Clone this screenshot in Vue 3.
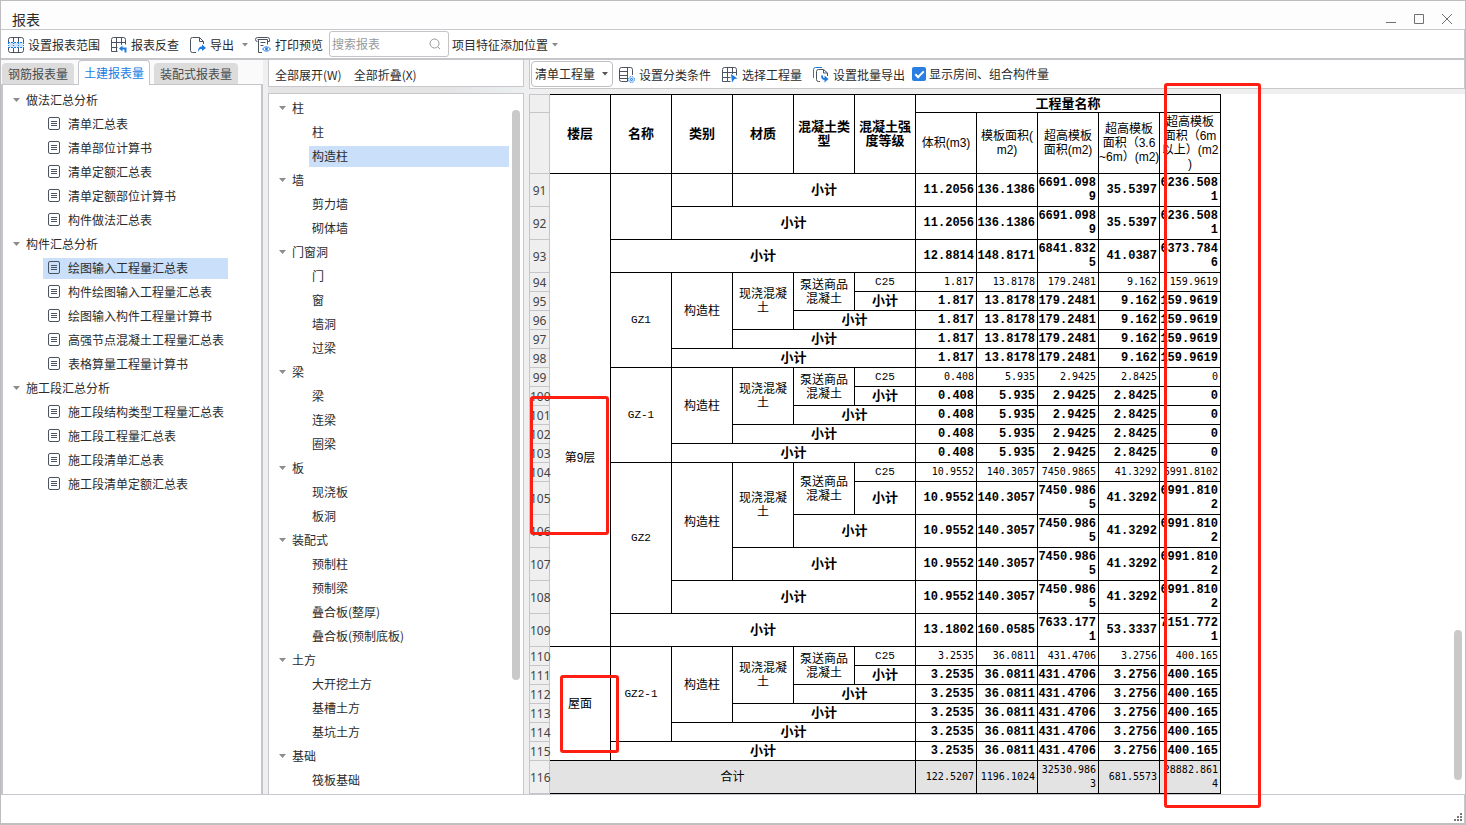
<script setup>
import { ref } from 'vue'

const keyword = ref('')
const quantityType = ref('清单工程量')
const showRooms = ref(true)

const tabs = ['钢筋报表量', '土建报表量', '装配式报表量']
const activeTab = ref('土建报表量')
const activeReport = ref('绘图输入工程量汇总表')
const activeMember = ref('构造柱')

const reports = [
  { name: '做法汇总分析', items: ['清单汇总表', '清单部位计算书', '清单定额汇总表', '清单定额部位计算书', '构件做法汇总表'] },
  { name: '构件汇总分析', items: ['绘图输入工程量汇总表', '构件绘图输入工程量汇总表', '绘图输入构件工程量计算书', '高强节点混凝土工程量汇总表', '表格算量工程量计算书'] },
  { name: '施工段汇总分析', items: ['施工段结构类型工程量汇总表', '施工段工程量汇总表', '施工段清单汇总表', '施工段清单定额汇总表'] },
]

const members = [
  { name: '柱', items: ['柱', '构造柱'] },
  { name: '墙', items: ['剪力墙', '砌体墙'] },
  { name: '门窗洞', items: ['门', '窗', '墙洞', '过梁'] },
  { name: '梁', items: ['梁', '连梁', '圈梁'] },
  { name: '板', items: ['现浇板', '板洞'] },
  { name: '装配式', items: ['预制柱', '预制梁', '叠合板(整厚)', '叠合板(预制底板)'] },
  { name: '土方', items: ['大开挖土方', '基槽土方', '基坑土方'] },
  { name: '基础', items: ['筏板基础'] },
]

const dimensions = [['楼层'], ['名称'], ['类别'], ['材质'], ['混凝土类', '型'], ['混凝土强', '度等级']]
const measures = [
  ['体积(m3)'],
  ['模板面积(', 'm2)'],
  ['超高模板', '面积(m2)'],
  ['超高模板', '面积（3.6', '~6m）(m2)'],
  ['超高模板', '面积（6m', '以上）(m2', ')'],
]

const sub = (cols) => ({ text: '小计', cols, kind: 'sum' })

// One component type: a C25 line followed by four nested subtotals.
function block(first, name, values, tall, floor) {
  const heads = [
    [
      ...(floor ? [floor] : []),
      { text: name, rows: 5, kind: 'code' },
      { text: '构造柱', rows: 4 },
      { text: '现浇混凝土', rows: 3, kind: 'wrap' },
      { text: '泵送商品混凝土', rows: 2, kind: 'wrap' },
      { text: 'C25', kind: 'code' },
    ],
    [sub(1)],
    [sub(2)],
    [sub(3)],
    [sub(4)],
  ]
  return heads.map((cells, i) => ({ no: first + i, cells, values, bold: i > 0, tall: tall && i > 0 }))
}

const rows = [
  {
    no: 91,
    cells: [{ text: '第9层', rows: 19, kind: 'floor' }, { text: '', rows: 2 }, { text: '' }, sub(3)],
    values: ['11.2056', '136.1386', '6691.0989', '35.5397', '6236.5081'], bold: true, tall: true,
  },
  { no: 92, cells: [sub(4)], values: ['11.2056', '136.1386', '6691.0989', '35.5397', '6236.5081'], bold: true, tall: true },
  { no: 93, cells: [sub(5)], values: ['12.8814', '148.8171', '6841.8325', '41.0387', '6373.7846'], bold: true, tall: true },
  ...block(94, 'GZ1', ['1.817', '13.8178', '179.2481', '9.162', '159.9619'], false),
  ...block(99, 'GZ-1', ['0.408', '5.935', '2.9425', '2.8425', '0'], false),
  ...block(104, 'GZ2', ['10.9552', '140.3057', '7450.9865', '41.3292', '6991.8102'], true),
  { no: 109, cells: [sub(5)], values: ['13.1802', '160.0585', '7633.1771', '53.3337', '7151.7721'], bold: true, tall: true },
  ...block(110, 'GZ2-1', ['3.2535', '36.0811', '431.4706', '3.2756', '400.165'], false, { text: '屋面', rows: 6 }),
  { no: 115, cells: [sub(5)], values: ['3.2535', '36.0811', '431.4706', '3.2756', '400.165'], bold: true },
  { no: 116, cells: [{ text: '合计', cols: 6 }], values: ['122.5207', '1196.1024', '32530.9863', '681.5573', '28882.8614'], tall: true, total: true },
]
</script>

<template>
  <div class="window">
    <header class="titlebar">
      <h1>报表</h1>
      <div class="controls">
        <button type="button" aria-label="最小化"><svg width="12" height="12" viewBox="0 0 12 12"><path d="M1 9.5h10" /></svg></button>
        <button type="button" aria-label="最大化"><svg width="12" height="12" viewBox="0 0 12 12"><path d="M1.500 1.500h9v9h-9z" /></svg></button>
        <button type="button" aria-label="关闭"><svg width="12" height="12" viewBox="0 0 12 12"><path d="M1 1l10 10M11 1L1 11" /></svg></button>
      </div>
    </header>

    <div class="toolbar">
      <button type="button" class="tool">
        <svg class="ico" width="16" height="16" viewBox="0 0 16 16">
          <rect x="1" y="5.500" width="14" height="5" class="pale" />
          <path d="M.5 5V2.500a2 2 0 0 1 2-2h11a2 2 0 0 1 2 2V5M.5 11v2.500a2 2 0 0 0 2 2h11a2 2 0 0 0 2-2V11M5.500.5V5M10.500.5V5M5.500 11v4.500M10.500 11v4.500" />
          <path class="blue" d="M0 5.500h16M0 10.500h16" stroke-dasharray="2 1" />
          <path class="blue" d="M.5 6v4M5.500 6v4M10.500 6v4M15.500 6v4" stroke-dasharray="1 1" />
        </svg>
        设置报表范围
      </button>
      <button type="button" class="tool">
        <svg class="ico" width="16" height="16" viewBox="0 0 16 16">
          <path d="M.5 10.500h6M.5 5.500h14M.5 10.500V2.500a2 2 0 0 1 2-2h10a2 2 0 0 1 2 2v5M5.500.5v14M10.500.5V8M.5 10.500v4h6" />
          <path class="blue thick" d="M9.500 11.500h5V15.500" />
          <path class="bluefill" d="M8 11.500L11.500 8.500v6z" />
        </svg>
        报表反查
      </button>
      <button type="button" class="tool export">
        <svg class="ico" width="16" height="16" viewBox="0 0 16 16">
          <path d="M6 15.500H2.500a2 2 0 0 1-2-2v-11a2 2 0 0 1 2-2h7l4 4V7M9.500.5v4h4" />
          <path class="bluefill" d="M8 15c0-4 1.500-5.500 4-5.500V7.500l4 3.500-4 3v-2c-2 0-3 .5-4 3z" />
        </svg>
        导出
        <svg class="caret" width="6" height="4" viewBox="0 0 6 4"><path d="M0 0h6L3 3.500z" /></svg>
      </button>
      <button type="button" class="tool">
        <svg class="ico" width="16" height="16" viewBox="0 0 16 16">
          <path d="M2.500 4.500a2 2 0 0 1-2-2 2 2 0 0 1 2-2h10a2 2 0 0 1 2 2v2h-2M2.500 2.500h10M3.500 3v12.500H7M12.500 2.500v5M5.500 5.500h5M5.500 8.500h3" />
          <path class="blue" d="M7.500 12q4-4.500 8 0-4 4.500-8 0z" />
          <circle class="bluefill" cx="11.500" cy="12" r="1.400" />
        </svg>
        打印预览
      </button>
      <label class="search">
        <input v-model="keyword" type="text" placeholder="搜索报表" aria-label="搜索报表" />
        <svg width="12" height="12" viewBox="0 0 12 12"><circle cx="5.500" cy="5.500" r="4.500" /><path d="M8.800 8.800L11 11" /></svg>
      </label>
      <button type="button" class="tool place">
        项目特征添加位置
        <svg class="caret" width="6" height="4" viewBox="0 0 6 4"><path d="M0 0h6L3 3.500z" /></svg>
      </button>
    </div>

    <main>
      <section class="left">
        <div class="tabs" role="tablist">
          <button
            v-for="tab in tabs" :key="tab" type="button" role="tab"
            :aria-selected="tab === activeTab" :class="{ on: tab === activeTab }" @click="activeTab = tab"
          >{{ tab }}</button>
        </div>
        <nav class="tree reports">
          <template v-for="group in reports" :key="group.name">
            <div class="group"><svg width="7" height="4" viewBox="0 0 7 4"><path d="M0 0h7L3.500 4z" /></svg>{{ group.name }}</div>
            <div v-for="item in group.items" :key="item" class="line">
              <button type="button" :class="{ on: item === activeReport }" @click="activeReport = item">
                <svg class="doc" width="12" height="13" viewBox="0 0 12 13"><rect x=".5" y=".5" width="11" height="12" rx="1.500" /><path d="M3 4.500h6M3 6.500h6M3 8.500h6" /></svg>
                {{ item }}
              </button>
            </div>
          </template>
        </nav>
      </section>

      <section class="middle">
        <div class="bar fold">
          <button type="button" class="tool">全部展开(W)</button>
          <button type="button" class="tool">全部折叠(X)</button>
        </div>
        <nav class="tree members">
          <template v-for="group in members" :key="group.name">
            <div class="group"><svg width="7" height="4" viewBox="0 0 7 4"><path d="M0 0h7L3.500 4z" /></svg>{{ group.name }}</div>
            <div v-for="item in group.items" :key="item" class="line">
              <button type="button" :class="{ on: item === activeMember }" @click="activeMember = item">{{ item }}</button>
            </div>
          </template>
          <span class="thumb"></span>
        </nav>
      </section>

      <section class="right">
        <div class="bar options">
          <div class="select">
            <select v-model="quantityType" aria-label="工程量类型">
              <option>清单工程量</option>
              <option>定额工程量</option>
            </select>
            <svg class="caret dark" width="6" height="4" viewBox="0 0 6 4"><path d="M0 0h6L3 3.500z" /></svg>
          </div>
          <button type="button" class="tool">
            <svg class="ico" width="16" height="16" viewBox="0 0 16 16">
              <path d="M8.500 14.500h-6a2 2 0 0 1-2-2v-10a2 2 0 0 1 2-2h9a2 2 0 0 1 2 2V8M8.500.5v14M.5 4.500h8M.5 8.500h8M.5 11.500h8" />
              <circle class="gear" cx="12.500" cy="12.500" r="2.500" />
              <circle class="blue" cx="12.500" cy="12.500" r="3" stroke-dasharray="1.400 .95" />
              <circle class="blue" cx="12.500" cy="12.500" r="1" />
            </svg>
            设置分类条件
          </button>
          <button type="button" class="tool">
            <svg class="ico" width="16" height="16" viewBox="0 0 16 16">
              <path d="M8.500 14.500h-3M.5 10.500h8M.5 5.500h14M.5 10.500v-8a2 2 0 0 1 2-2h10a2 2 0 0 1 2 2v6M5.500.5v14M10.500.5V7M.5 10.500v4h5" />
              <path class="bluefill" d="M9 7l6.500 4.500-3 .5-2.500 3.500z" />
            </svg>
            选择工程量
          </button>
          <button type="button" class="tool">
            <svg class="ico" width="16" height="16" viewBox="0 0 16 16">
              <path class="blue" d="M.5 11V2.500a2 2 0 0 1 2-2H9" />
              <path d="M7 14.500H5.500a2 2 0 0 1-2-2v-8a2 2 0 0 1 2-2h5l4 3.500v3M10.500 3v3h4" />
              <path class="blue thick" d="M9 8.500c0 3 1 3.500 3 3.500" />
              <path class="bluefill" d="M11.500 8.500L15.500 12l-4 3.500z" />
            </svg>
            设置批量导出
          </button>
          <label class="check"><input v-model="showRooms" type="checkbox" />显示房间、组合构件量</label>
        </div>

        <div class="sheet">
          <table>
            <colgroup>
              <col class="num" />
              <col v-for="n in 11" :key="n" class="data" />
            </colgroup>
            <thead>
              <tr class="h1">
                <th class="no"></th>
                <th v-for="head in dimensions" :key="head[0]" rowspan="2" class="dim">
                  <template v-for="(part, i) in head" :key="part"><br v-if="i" />{{ part }}</template>
                </th>
                <th colspan="5" class="dim">工程量名称</th>
              </tr>
              <tr class="h2">
                <th class="no"></th>
                <th v-for="(head, m) in measures" :key="m" class="measure">
                  <template v-for="(part, i) in head" :key="part"><br v-if="i" />{{ part }}</template>
                </th>
              </tr>
            </thead>
            <tbody>
              <tr v-for="row in rows" :key="row.no" :class="{ tall: row.tall, bold: row.bold, total: row.total }">
                <th class="no" scope="row">{{ row.no }}</th>
                <td v-for="(cell, i) in row.cells" :key="i" :rowspan="cell.rows || 1" :colspan="cell.cols || 1" :class="cell.kind">{{ cell.text }}</td>
                <td v-for="(value, i) in row.values" :key="'v' + i" class="value">{{ value }}</td>
              </tr>
            </tbody>
          </table>
          <span class="thumb"></span>
          <span class="mark floors"></span>
          <span class="mark roof"></span>
          <span class="mark column"></span>
        </div>
      </section>
    </main>

    <footer>
      <svg width="9" height="9" viewBox="0 0 9 9"><path d="M6 0h2v2H6zM3 3h2v2H3zM6 3h2v2H6zM0 6h2v2H0zM3 6h2v2H3zM6 6h2v2H6z" /></svg>
    </footer>
  </div>
</template>

<style>
body {
  margin: 0;
  background: #fff;
}
</style>

<style scoped>
.window {
  box-sizing: border-box;
  min-height: 100vh;
  display: flex;
  flex-direction: column;
  border: 1px solid #bdbdbf;
  border-bottom: 2px solid #c0c0c2;
  background: #fff;
  color: #2b2b2b;
  font: 12px/18px "Noto Sans CJK SC", "Noto Sans", sans-serif;
  overflow: hidden;
}

button,
input,
select {
  font: inherit;
  color: inherit;
  margin: 0;
}

button {
  border: 0;
  padding: 0;
  background: none;
  white-space: nowrap;
}

.titlebar {
  display: flex;
  align-items: center;
  justify-content: space-between;
  height: 28px;
  padding: 0 12px 0 11px;
  background: #fdfdfd;
}

h1 {
  margin: 0;
  padding-top: 8px;
  font-size: 14px;
  font-weight: 400;
  line-height: 20px;
}

.controls {
  display: flex;
  gap: 16px;
  padding-top: 8px;
}

.controls button {
  display: flex;
}

svg {
  flex: none;
  fill: none;
}

.controls svg {
  stroke: #707070;
}

.toolbar {
  display: flex;
  align-items: center;
  height: 28px;
  padding-left: 7px;
  border-top: 1px solid #c8c8cc;
  border-right: 1px solid #c8c8cc;
  border-bottom: 2px solid #c4c6ca;
}

.tool {
  display: flex;
  align-items: center;
  gap: 4px;
}

.toolbar .tool {
  margin-right: 11px;
  padding-top: 2px;
}

.toolbar .export {
  margin-right: 7px;
}

.toolbar .place {
  margin: 0 0 0 3px;
}

.export .caret {
  margin-left: 4px;
}

.ico {
  stroke: #4b5260;
}

.ico .blue {
  stroke: #1f7ae0;
}

.ico .thick {
  stroke-width: 2;
}

.ico .bluefill {
  fill: #1f7ae0;
  stroke: none;
}

.ico .pale,
.ico .gear {
  fill: #cfe4fb;
  stroke: none;
}

.caret {
  fill: #8a8a8a;
}

.dark {
  fill: #555;
}

.search {
  display: flex;
  align-items: center;
  box-sizing: border-box;
  width: 120px;
  height: 26px;
  padding: 0 7px 0 2px;
  margin-left: -5px;
  border: 1px solid #c4c4c6;
  border-radius: 3px;
}

.search input {
  flex: 1;
  min-width: 0;
  border: 0;
  padding: 0;
  outline: 0;
  background: none;
}

.search input::placeholder {
  color: #9a9a9a;
}

.search svg {
  stroke: #999;
}

main {
  flex: 1;
  display: flex;
  gap: 5px;
  background: #efeff0;
}

.left {
  flex: 0 0 262px;
  display: flex;
  flex-direction: column;
}

.tabs {
  display: flex;
  align-items: flex-end;
  gap: 4px;
  height: 24px;
  padding-left: 1px;
  background: #fafafa;
}

.tabs button {
  box-sizing: border-box;
  height: 21px;
  padding: 0 6px;
  border-radius: 4px 4px 0 0;
  background: #dcdcdd;
  color: #4a4a4a;
}

.tabs .on {
  height: 25px;
  margin-bottom: -1px;
  padding: 0 5px;
  border: 1px solid #c4c4cc;
  border-bottom: 0;
  background: #fff;
  color: #1b7ce4;
  position: relative;
}

.tree {
  flex: 1;
  background: #fff;
}

.reports {
  border: 1px solid #c4c6ca;
  border-width: 1px 2px 0;
  padding-top: 3px;
}

.group {
  display: flex;
  align-items: center;
  gap: 6px;
  height: 24px;
  padding-left: 10px;
}

.group svg {
  fill: #8c8c8c;
}

.line {
  display: flex;
  align-items: center;
  height: 24px;
}

.line button {
  display: flex;
  align-items: center;
  height: 21px;
  text-align: left;
}

.reports .line {
  padding-left: 40px;
}

.reports button {
  width: 185px;
  gap: 8px;
  padding-left: 5px;
}

.doc {
  margin-bottom: 2px;
  stroke: #4b5260;
}

.line .on {
  background: #c9dffa;
}

.middle {
  flex: 0 0 256px;
  display: flex;
  flex-direction: column;
  gap: 6px;
  background: linear-gradient(to right, #e4e4e5, #e4e4e5 70%, #ecf0f1);
}

.bar {
  display: flex;
  align-items: center;
  box-sizing: border-box;
  border: 1px solid #c8c8cc;
  border-top: 0;
  background: #fff;
}

.fold {
  height: 27px;
  gap: 12px;
  padding: 3px 6px 0;
}

.members {
  position: relative;
  border: 1px solid #c8c8cc;
  border-bottom: 0;
  padding-top: 2px;
}

.members .line {
  padding-left: 40px;
}

.members .line button {
  width: 200px;
  padding-left: 3px;
}

.thumb {
  position: absolute;
  right: 3px;
  width: 8px;
  border-radius: 4px;
  background: #c9c9c9;
}

.members .thumb {
  top: 16px;
  height: 570px;
}

.right {
  flex: 1;
  min-width: 692px;
  display: flex;
  flex-direction: column;
  gap: 5px;
}

.options {
  height: 29px;
  gap: 11px;
  padding: 0 1px;
}

.select {
  position: relative;
  margin-right: -5px;
}

.select select {
  appearance: none;
  box-sizing: border-box;
  width: 82px;
  height: 26px;
  padding: 0 16px 0 3px;
  border: 1px solid #bfbfc3;
  border-radius: 4px;
  background: #fff;
}

.select svg {
  position: absolute;
  right: 5px;
  top: 11px;
}

.options .tool {
  padding-top: 2px;
}

.check {
  display: flex;
  align-items: center;
  gap: 3px;
  margin-left: -4px;
}

.check input {
  appearance: none;
  display: grid;
  place-items: center;
  width: 14px;
  height: 14px;
  border-radius: 2px;
  background: #2a7de1;
}

.check input:checked::after {
  content: "";
  width: 3px;
  height: 7px;
  margin-bottom: 2px;
  border: solid #fff;
  border-width: 0 2px 2px 0;
  transform: rotate(45deg);
}

.sheet {
  position: relative;
  flex: 1;
  background: #fff;
}

table {
  table-layout: fixed;
  width: 692px;
  border-collapse: separate;
  border-spacing: 0;
  color: #000;
  font-family: "Liberation Sans", "Noto Sans CJK SC", sans-serif;
  line-height: 14px;
}

.num {
  width: 21px;
}

.data {
  width: 61px;
}

th,
td {
  box-sizing: border-box;
  height: 19px;
  padding: 0;
  border: solid #000;
  border-width: 0 1px 1px 0;
  font-weight: 400;
  text-align: center;
  vertical-align: middle;
}

.h1 th {
  border-top-width: 1px;
}

.h2 th {
  height: 61px;
}

.tall > * {
  height: 33px;
}

th.dim {
  font-size: 13px;
  font-weight: 700;
}

.measure {
  white-space: nowrap;
}

th.no {
  padding-top: 2px;
  border-color: #c6c6ca;
  border-left-width: 1px;
  background: #efefef;
  color: #444;
  font-family: "Noto Sans", sans-serif;
  white-space: nowrap;
}

.code {
  font-family: "Liberation Mono", monospace;
  font-size: 11px;
}

.wrap {
  padding: 0 5px;
}

.floor {
  padding-top: 96px;
}

.sum {
  font-size: 13px;
  font-weight: 700;
}

.value {
  padding-right: 2px;
  font-family: "DejaVu Sans Mono", monospace;
  font-size: 10px;
  text-align: right;
  word-break: break-all;
}

.bold .value {
  font-family: "Liberation Mono", monospace;
  font-size: 12px;
  font-weight: 700;
}

.total td {
  background: #e3e3e3;
}

.sheet .thumb {
  top: 536px;
  height: 150px;
}

.mark {
  position: absolute;
  z-index: 2;
  box-sizing: border-box;
  border: 3px solid #ff1e12;
  border-radius: 3px;
  pointer-events: none;
}

.floors {
  left: 1px;
  top: 302px;
  width: 79px;
  height: 139px;
}

.roof {
  left: 31px;
  top: 581px;
  width: 59px;
  height: 78px;
}

.column {
  left: 635px;
  top: -11px;
  width: 97px;
  height: 725px;
}

footer {
  display: flex;
  align-items: flex-end;
  justify-content: flex-end;
  height: 28px;
  border-top: 1px solid #c8c8d0;
  border-right: 1px solid #c8c8cc;
}

footer svg {
  margin: 0 1px 1px;
  fill: #777;
}
</style>
